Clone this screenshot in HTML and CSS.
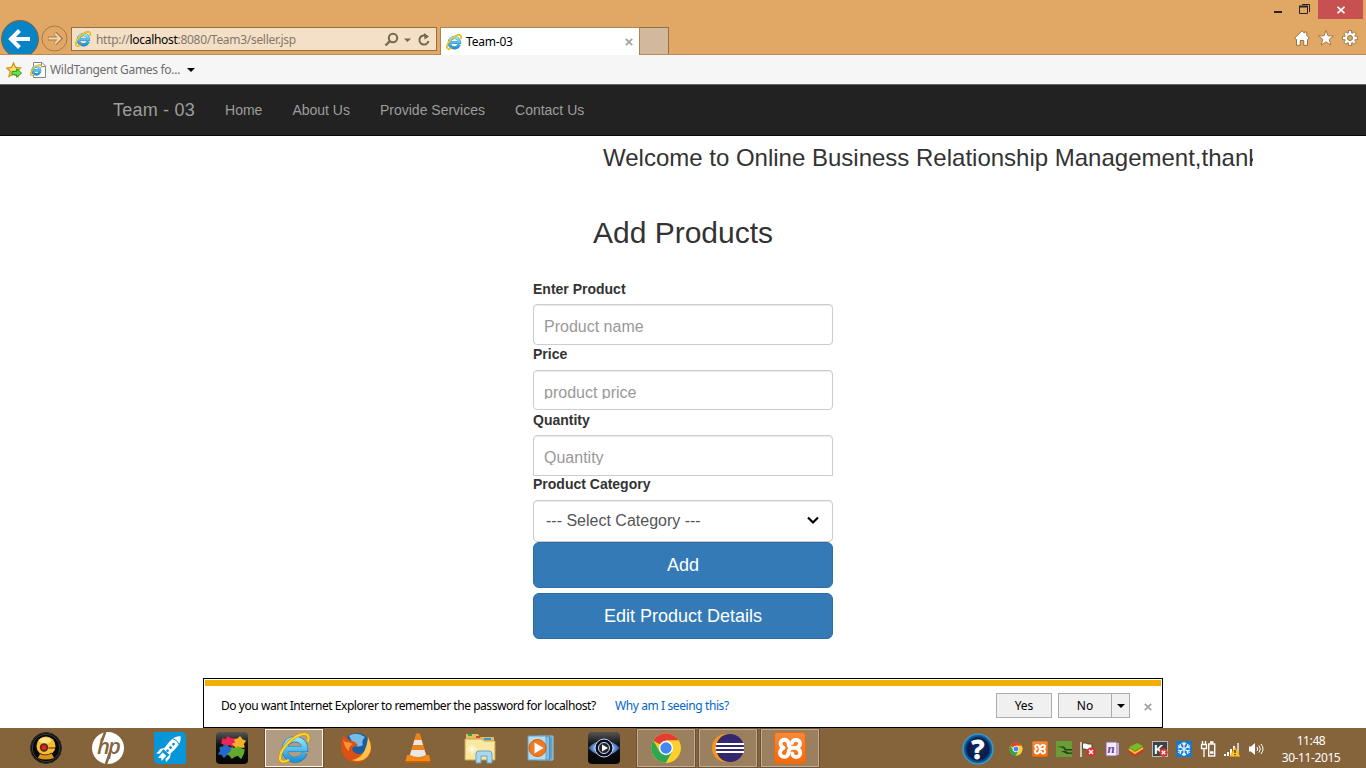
FILE: index.html
```html
<!DOCTYPE html>
<html lang="en">
<head>
<meta charset="utf-8">
<title>Team-03</title>
<link rel="stylesheet" href="styles.css">
</head>
<body>
<svg class="defs" aria-hidden="true">
  <defs>
    <linearGradient id="ieBlue" x1="0" y1="0" x2="0" y2="1"><stop offset="0" stop-color="#8ee4fb"/><stop offset="1" stop-color="#2196d6"/></linearGradient>
    <linearGradient id="gloss" x1="0" y1="0" x2="0" y2="1"><stop offset="0" stop-color="#555"/><stop offset=".4" stop-color="#111"/><stop offset="1" stop-color="#050505"/></linearGradient>
    <linearGradient id="orange" x1="0" y1="0" x2="0" y2="1"><stop offset="0" stop-color="#f58a3c"/><stop offset="1" stop-color="#f2690c"/></linearGradient>
    <radialGradient id="helpBlue"><stop offset="0" stop-color="#142c66"/><stop offset=".7" stop-color="#071b4a"/><stop offset="1" stop-color="#1686c8"/></radialGradient>
    <radialGradient id="eyeBlue"><stop offset="0" stop-color="#e8f5ff"/><stop offset=".6" stop-color="#84aeea"/><stop offset="1" stop-color="#1c3f80"/></radialGradient>
  </defs>
  <symbol id="ie" viewBox="0 0 32 32">
    <path d="M26.6 21A10.3 10.3 0 1 1 27.2 17H8.5" fill="none" stroke="#1878b5" stroke-width="6"/>
    <path d="M26.3 21A10.2 10.2 0 1 1 27 17H8.5" fill="none" stroke="url(#ieBlue)" stroke-width="5"/>
    <path d="M29.8 10C31.5 5 30.3 1.6 25.8 1.9C16 2.4 1.5 17 1.8 26.5C2 31 6.5 30.7 11 28" fill="none" stroke="#c99200" stroke-width="3"/>
    <path d="M29.8 9.7C31.5 5 30.3 1.8 25.8 2C16 2.6 1.6 17 1.9 26.5C2.2 30.6 6.5 30.4 11 27.8" fill="none" stroke="#ffd52b" stroke-width="2.1"/>
  </symbol>
  <symbol id="chrome" viewBox="0 0 32 32">
    <circle cx="16" cy="16" r="14.7" fill="#f9cb25"/>
    <path d="M16 16L3.3 8.6A14.7 14.7 0 0 1 28.7 8.6H16Z" fill="#e23e31"/>
    <path d="M3.3 8.6A14.7 14.7 0 0 0 16 30.7L22.5 19.5L16 16L9.5 19.5Z" fill="#2ea850"/>
    <path d="M28.7 8.6H16V16L22.4 19.6L16 30.7A14.7 14.7 0 0 0 28.7 8.6Z" fill="#fbd02b"/>
    <circle cx="16" cy="16" r="7.2" fill="#fff"/><circle cx="16" cy="16" r="5.7" fill="#4487ef"/>
  </symbol>
  <symbol id="xampp" viewBox="0 0 32 32">
    <rect x=".5" y=".5" width="31" height="31" rx="3" fill="url(#orange)" stroke="#e8680f"/>
    <path d="M14.500 11.500C14.500 6.500 6.500 6.500 6.500 11.500C6.500 14 8 15 9.500 15.800C7.500 16.800 6 18.500 6 21C6 26 14 26.500 14.500 21C14.700 17.500 16 15.900 19 15.900H22.500M18 11C18 6.800 26 6.500 26 11.500C26 14 24.500 15.200 22.500 15.900C25 17 26.300 18.500 26.300 21C26.300 26 18.500 26.500 18.300 21.500M14.500 11.500C14.500 14.500 16 15.900 19 15.900" fill="none" stroke="#fff" stroke-width="3.800" stroke-linecap="round" stroke-linejoin="round"/>
  </symbol>
  <symbol id="badge" viewBox="0 0 10 10"><circle cx="5" cy="5" r="4.600" fill="#d8322d"/><path d="M3 3L7 7M7 3L3 7" stroke="#fff" stroke-width="1.400"/></symbol>
</svg>

<div class="window">
  <header class="titlebar">
    <svg class="back" viewBox="0 0 40 34"><circle cx="20" cy="19" r="18.500" fill="#0684c6" stroke="#876039"/><path d="M30 19H12M19.500 10.500L11 19L19.500 27.500" fill="none" stroke="#fff" stroke-width="4"/></svg>
    <svg class="forward" viewBox="0 0 27 27"><circle cx="13.500" cy="13.500" r="12.500" fill="none" stroke="#a5784a"/><path d="M7 13.500H19M14 8L19.500 13.500L14 19" fill="none" stroke="#a5784a" stroke-width="3.800"/><path d="M7.500 13.500H18.500M14 8.500L19 13.500L14 18.500" fill="none" stroke="#f3d5ae" stroke-width="2"/></svg>
    <div class="address">
      <svg class="i16"><use href="#ie"/></svg>
      <span class="url">http://<b>localhost</b>:8080/Team3/seller.jsp</span>
      <svg class="address-tools" viewBox="0 0 48 18"><g fill="none" stroke="#786552"><circle cx="9" cy="8" r="4.200" stroke-width="2"/><path d="M6 11L1.500 15.500" stroke-width="2.400"/><path d="M43 6.500A4.600 4.600 0 1 0 44.500 11" stroke-width="2"/></g><path d="M20 8.500H27L23.500 12ZM40 3L45 6.500L40.500 9.500Z" fill="#786552"/></svg>
    </div>
    <div class="tab"><svg class="i16"><use href="#ie"/></svg><span class="tab-name">Team-03</span><svg class="x" viewBox="0 0 8 8"><path d="M.8.800L7.200 7.200M7.200.800L.8 7.200" stroke="#a5a5a5" stroke-width="1.900"/></svg></div>
    <div class="new-tab"></div>
    <div class="window-side">
      <div class="controls">
        <svg class="minrest" viewBox="0 0 44 19"><path d="M0 12H8" stroke="#2a2320" stroke-width="2"/><path d="M25.500 6.500H33.500V13.500H25.500ZM28 4.500H35.500V12" fill="none" stroke="#2a2320"/><path d="M25 6.500H34" stroke="#2a2320" stroke-width="2"/></svg>
        <div class="close"><svg class="x" viewBox="0 0 8 8"><path d="M.5.800L7.500 7.200M7.500.800L.5 7.200" stroke="#fff" stroke-width="1.800"/></svg></div>
      </div>
      <div class="tools">
        <svg class="i16" viewBox="0 0 16 16"><path d="M8 .8L.7 8L2.500 9.500V15.300H6.300V10.500H9.700V15.300H13.500V9.500L15.300 8L12.800 5.500V2H10.300V3Z" fill="#fff" stroke="#98713f"/></svg>
        <svg class="i16" viewBox="0 0 16 16"><path d="M8 .5L10 5.800L15.500 6L11.200 9.400L12.800 15L8 11.900L3.200 15L4.800 9.400L.5 6L6 5.800Z" fill="#fff" stroke="#98713f" stroke-width=".9"/></svg>
        <svg class="i16" viewBox="0 0 16 16"><g stroke="#98713f" stroke-width="4"><path d="M8 .3V15.700M.3 8H15.700M2.700 2.700L13.300 13.300M13.300 2.700L2.700 13.300"/></g><g stroke="#fff" stroke-width="2.300"><path d="M8 1V15M1 8H15M3.100 3.100L12.900 12.900M12.900 3.100L3.100 12.900"/></g><circle cx="8" cy="8" r="5" fill="#fff"/><circle cx="8" cy="8" r="2.500" fill="#e1a865" stroke="#98713f"/></svg>
      </div>
    </div>
  </header>

  <div class="favorites">
    <svg class="i16" viewBox="0 0 16 16"><path d="M7.500 1L9.500 5.500L14.500 6L10.800 9.300L12 14.500L7.500 12L3 14.500L4.200 9.300L.8 6L5.500 5.500Z" fill="#ffdf70" stroke="#d39413" stroke-width="1.300"/><path d="M6 9.300H10.700V6.800L15.500 11L10.700 15.300V12.800H6Z" fill="#6be04c" stroke="#239923"/></svg>
    <svg class="page-icon" viewBox="0 0 16 16"><path d="M3.500.5H12L15.500 4V15.500H3.500Z" fill="#fff" stroke="#858585"/><path d="M11.500.5V4.500H15.500" fill="none" stroke="#858585"/><use href="#ie" x="0" y="2" width="12" height="12"/></svg>
    <span class="fav-name">WildTangent Games fo...</span>
    <i class="caret"></i>
  </div>

  <nav class="navbar"><a class="brand">Team - 03</a><a>Home</a><a>About Us</a><a>Provide Services</a><a>Contact Us</a></nav>

  <main class="content">
    <div class="welcome">Welcome to Online Business Relationship Management,thank you</div>
    <h2>Add Products</h2>
    <form class="product-form">
      <label>Enter Product</label>
      <div class="field name"><span>Product name</span></div>
      <label>Price</label>
      <div class="field price"><span>product price</span></div>
      <label class="quantity-label">Quantity</label>
      <div class="field quantity"><span>Quantity</span></div>
      <label>Product Category</label>
      <div class="field category"><span>--- Select Category ---</span><svg class="chevron" viewBox="0 0 12 9"><path d="M1 1.500L6 6.500L11 1.500" fill="none" stroke="#000" stroke-width="2.200"/></svg></div>
      <button type="button">Add</button>
      <button type="button">Edit Product Details</button>
    </form>
  </main>

  <aside class="notice">
    <div class="stripe"></div>
    <div class="notice-row">
      <span class="question">Do you want Internet Explorer to remember the password for localhost?</span>
      <a class="why">Why am I seeing this?</a>
      <span class="answer yes">Yes</span>
      <span class="answer no">No</span><span class="answer drop"><i class="caret"></i></span>
      <svg class="x" viewBox="0 0 8 8"><path d="M.8.800L7.200 7.200M7.200.800L.8 7.200" stroke="#a5a5a5" stroke-width="1.900"/></svg>
    </div>
  </aside>

  <footer class="taskbar">
    <div class="apps">
      <div class="app"><svg viewBox="0 0 32 32"><circle cx="16" cy="16" r="15.500" fill="#090909" stroke="#303030"/><circle cx="16" cy="16" r="13.800" fill="none" stroke="#555" stroke-width=".7"/><path d="M10 22H22L24 26Q16 29 8 26Z" fill="#d99614"/><circle cx="16" cy="14" r="9.500" fill="#f7bc35"/><ellipse cx="15" cy="8.500" rx="6" ry="3" fill="#ffe58a"/><circle cx="14" cy="15.500" r="4.200" fill="#49301c"/><circle cx="14" cy="15.500" r="2.500" fill="#ee1e1e"/><path d="M18.500 16H25M9 21Q15 25 22 21" stroke="#4a2b08" fill="none"/></svg></div>
      <div class="app"><svg class="hp-logo" viewBox="0 0 32 32"><circle cx="16" cy="16" r="16" fill="#fff"/><text x="5" y="22" class="hp">hp</text><path d="M9.800 9L13.200 0M14 32L17.800 21" stroke="#86643e" stroke-width="2.500"/></svg></div>
      <div class="app"><svg viewBox="0 0 32 32"><path d="M0 0H29L32 3V32H3L0 29Z" fill="#0796d8"/><g transform="translate(16.500 15.500) rotate(42)"><path d="M0 -15C5 -11 5 -5 4 6H-4C-5 -5 -5 -11 0 -15Z" fill="#fff"/><path d="M-4 4L-6.500 8V14L-4 12ZM4 4L6.500 8V14L4 12Z" fill="#fff"/><path d="M-2.500 9H2.500V16L0 14L-2.500 16Z" fill="#fff"/><path d="M-4 7.500H4M-4 -8Q0 -10 4 -8" fill="none" stroke="#0796d8"/><circle cy="-4.500" r="1.400" fill="#0796d8"/><circle cy="0" r="1.400" fill="#0796d8"/><circle cy="4.300" r="1.300" fill="#0796d8"/></g></svg></div>
      <div class="app"><svg viewBox="0 0 32 32"><rect width="32" height="32" rx="4" fill="url(#gloss)"/><g stroke-linejoin="round" stroke-width="1.500"><path d="M7 7L10 8L12 5L15 7L19 7L18 11L20 13L16 14L13 12L10 15L8 12L6 11Z" fill="#ee2556" stroke="#ee2556"/><path d="M19 8L22 7L24 5L26 8L29 9L27 12L28 15L24 15L21 17L19 14L17 12L20 11Z" fill="#f4b126" stroke="#f4b126"/><path d="M4 16L7 15L9 13L12 15L15 16L14 19L15 23L11 22L8 25L6 22L3 22L5 19Z" fill="#256acb" stroke="#256acb"/><path d="M16 16L20 17L22 15L25 17L28 18L27 22L25 26L22 23L19 24L16 26L14 23L12 22L15 20Z" fill="#62a82e" stroke="#62a82e"/></g></svg></div>
      <div class="app open active"><svg viewBox="0 0 32 32"><use href="#ie"/></svg></div>
      <div class="app"><svg viewBox="0 0 32 32"><circle cx="17" cy="14.500" r="13.500" fill="#1b5e9f"/><path d="M9 4Q16 -1 25 5Q21 9 23 13Q16 17 13 11Z" fill="#78bce5"/><path d="M3 4Q7 5 9 8L15 10L18 13L12 16Q13 22 20 22Q27 21 29 9Q34 17 29 24Q22 33 12 30Q1 26 1 14Q1 8 3 4Z" fill="#dc4f15"/><path d="M28 5Q34 16 28 24Q22 31 12 28Q26 26 28 5Z" fill="#ffc347"/><path d="M3 8Q6 11 8 10L13 12Q8 15 9 19Q5 17 3 8Z" fill="#f89432"/></svg></div>
      <div class="app"><svg viewBox="0 0 32 32"><path d="M5 23H27L29 31H3Z" fill="#f28a18"/><path d="M14 2Q16 0 18 2L25 25Q16 30 7 25Z" fill="#ef831b"/><path d="M12.500 8H19.500L21 13H11ZM9.600 18H22.400L24 23Q16 27 8 23Z" fill="#e8e8e8"/><path d="M3 30H29" stroke="#c45f05" stroke-width="2"/></svg></div>
      <div class="app"><svg viewBox="0 0 32 32"><path d="M2 2H14L16 5H30V27H2Z" fill="#dfbd61"/><path d="M1 7H18L20 9H31V28H1Z" fill="#f9e7a2" stroke="#c9a54d"/><path d="M4 3H8" stroke="#27a747" stroke-width="2"/><path d="M12 5H16" stroke="#d64331" stroke-width="2"/><path d="M20 7H27" stroke="#3399db" stroke-width="2"/><path d="M12 31V22Q12 19 15 19H25Q28 19 28 22V31H23V24H17V31Z" fill="#a9d8ef" stroke="#65a5ca"/><path d="M8 13V22M3 17H13M5 14L11 20M11 14L5 20" stroke="#fff" stroke-width=".8"/></svg></div>
      <div class="app"><svg viewBox="0 0 32 32"><path d="M12 4H27V28H12Z" fill="#5fa1cb" stroke="#9acde8"/><path d="M8 4H23.500V28H8Z" fill="#8bbddd" stroke="#4c8fb8"/><path d="M2 4H20V28H2Z" fill="#b9dcec" stroke="#5ba3c8"/><circle cx="11.500" cy="16" r="8.500" fill="#f17a22" stroke="#d65b0c"/><path d="M8.500 10.500L17.500 16L8.500 21.500Z" fill="#fff"/></svg></div>
      <div class="app"><svg viewBox="0 0 32 32"><rect width="32" height="32" rx="4" fill="url(#gloss)"/><path d="M0 16Q16 0 32 16Q16 32 0 16Z" fill="url(#eyeBlue)"/><circle cx="16" cy="16" r="9" fill="#0a1020" stroke="#b9dcff"/><circle cx="16" cy="16" r="5.500" fill="#202630" stroke="#ddd"/><path d="M14 12.500L20 16L14 19.500Z" fill="#fff"/></svg></div>
      <div class="app open"><svg viewBox="0 0 32 32"><use href="#chrome"/></svg></div>
      <div class="app open"><svg viewBox="0 0 32 32"><circle cx="14" cy="16" r="14" fill="#f5941e"/><circle cx="18" cy="16" r="14" fill="#33276d"/><path d="M4 12H32M3.500 16H32M4 20H32" stroke="#fff" stroke-width="2"/></svg></div>
      <div class="app open"><svg viewBox="0 0 32 32"><use href="#xampp"/></svg></div>
    </div>

    <svg class="help" viewBox="0 0 32 32"><circle cx="16" cy="16" r="15" fill="url(#helpBlue)" stroke="#35a2dd" stroke-width="1.200"/><text x="16" y="26" text-anchor="middle" class="help-mark">?</text></svg>
    <div class="tray">
      <svg viewBox="0 0 16 16"><use href="#chrome" x="1" y="1" width="14" height="14"/></svg>
      <svg viewBox="0 0 16 16"><use href="#xampp"/></svg>
      <svg viewBox="0 0 16 16"><path d="M0 0H16V16H0Z" fill="#6b9d36"/><path d="M1 5.500H8L10 8H16V9.500H9L7 7ZM5 10H10L12 11.500H16V13H11Z" fill="#26421b"/></svg>
      <svg viewBox="0 0 16 16"><path d="M1 1V16" stroke="#fff" stroke-width="1.300"/><path d="M2.500 2H6L8 3H12V9H7L5 8H2.500Z" fill="#fff" stroke="#55442e"/><use href="#badge" x="6" y="6" width="10" height="10"/></svg>
      <svg viewBox="0 0 16 16"><path d="M2 1H13V15H2Z" fill="#f2edf7" stroke="#8462a0"/><path d="M13 2H15V14H13" fill="#c4a5d5"/><text x="3.500" y="12" class="note-mark">n</text></svg>
      <svg viewBox="0 0 16 16"><path d="M1 10L7 14L15 9" fill="none" stroke="#d62f2f" stroke-width="2.500"/><path d="M1 8L7 12L15 7" fill="none" stroke="#f5c422" stroke-width="2"/><path d="M1 6L9 2L15 5L7 10Z" fill="#75bd25"/></svg>
      <svg viewBox="0 0 16 16"><rect width="16" height="16" fill="#b9b9b9"/><rect x="1" y="1" width="14" height="14" fill="#3d4242"/><text x="2" y="12.500" class="k-mark">K</text><use href="#badge" x="7" y="7" width="9" height="9"/></svg>
      <svg viewBox="0 0 16 16"><rect width="16" height="16" fill="#1878d0"/><path d="M8 1V15M2 4.500L14 11.500M14 4.500L2 11.500M6 2L8 4L10 2M6 14L8 12L10 14M2 7L5 6L4 3M14 9L11 10L12 13M14 7L11 6L12 3M2 9L5 10L4 13" stroke="#e2f6ff" stroke-width="1.300" fill="none"/></svg>
      <svg viewBox="0 0 16 16"><path d="M1 3.500H7M2.500 0V3M5.500 0V3M1.500 4V7.500H6.500V4M4 8V16" fill="none" stroke="#fff" stroke-width="1.300"/><rect x="8.700" y="3" width="6" height="12" fill="none" stroke="#fff" stroke-width="1.400"/><path d="M10 1.500H13.500M10 11.500H13.500" stroke="#fff" stroke-width="2.500"/></svg>
      <svg viewBox="0 0 16 16"><path d="M1 13V15M4 11V15M7 8V15M10 5V15" stroke="#fff" stroke-width="2"/><path d="M14 2V15" stroke="#ccc" stroke-width="2"/><path d="M11 6L16 15.500H6Z" fill="#ffc62b" stroke="#e79b00" stroke-width=".6"/><path d="M11 9V12M11 13V14.300" stroke="#443000" stroke-width="1.300"/></svg>
      <svg viewBox="0 0 16 16"><path d="M1 5.500H3L7 2V14L3 10.500H1Z" fill="#fff"/><path d="M9 6Q10.500 8 9 10M11 4.500Q13.500 8 11 11.500M13 3Q17 8 13 13" stroke="#fff" fill="none"/></svg>
    </div>
    <div class="clock"><span class="time">11:48</span><span class="date">30-11-2015</span></div>
  </footer>
</div>
</body>
</html>
```
FILE: styles.css
```css
* { box-sizing: border-box; }
body { margin: 0; overflow: hidden; color: #333; background: #fff; font: 14px/20px "Liberation Sans", Arial, sans-serif; }
svg { display: block; flex: none; }
.defs { position: absolute; width: 0; height: 0; }
.window { position: relative; display: flex; flex-direction: column; width: 1366px; height: 768px; overflow: hidden; }
.titlebar { display: flex; align-items: flex-end; flex: none; height: 55px; background: #e1a865; border-bottom: 1px solid #b98d57; }
.back { width: 40px; height: 34px; }
.forward { width: 27px; height: 27px; margin: 0 2px 2px 1px; }
.i16 { width: 16px; height: 16px; }
.address { display: flex; align-items: center; width: 366px; height: 24px; margin: 0 3px 3px 1px; padding: 0 4px 0 3px; border: 1px solid #957044; background: #f4e0c7; }
.url, .tab-name, .fav-name, .question, .why, .answer, .clock { font-family: "Noto Sans", sans-serif; font-size: 12px; white-space: nowrap; }
.url { margin-left: 5px; padding-top: 1px; color: #85776a; letter-spacing: -.3px; }
.url b { color: #000; font-weight: 400; }
.address-tools { width: 48px; height: 18px; margin-left: auto; }
.tab { display: flex; align-items: center; width: 200px; height: 28px; margin-bottom: -1px; padding: 0 6px 0 5px; background: #fff; border: 1px solid #ad8451; border-bottom: 0; }
.tab-name { margin-left: 4px; color: #000; letter-spacing: -.2px; }
.x { width: 8px; height: 8px; }
.tab .x { margin-left: auto; }
.new-tab { width: 29px; height: 27px; background: #d2b99b; border: 1px solid #957044; border-width: 1px 1px 0 0; }
.window-side { display: flex; flex-direction: column; align-self: flex-start; margin-left: auto; }
.controls { display: flex; }
.minrest { width: 44px; height: 19px; }
.close { display: flex; justify-content: center; align-items: center; width: 45px; height: 19px; margin-right: 3px; background: #c75050; }
.tools { display: flex; justify-content: flex-end; gap: 8px; margin: 11px 8px 0 0; }
.favorites { display: flex; align-items: center; flex: none; height: 30px; padding-left: 6px; background: #f6f6f6; border-bottom: 1px solid #666; }
.page-icon { width: 16px; height: 16px; margin-left: 8px; }
.fav-name { width: 137px; margin-left: 4px; color: #6d6d6d; letter-spacing: -.3px; }
.caret { width: 0; border: 4px solid transparent; border-top-color: #000; border-bottom: 0; }
.navbar { display: flex; align-items: center; flex: none; height: 51px; padding-left: 98px; color: #9d9d9d; background: #222; border-bottom: 1px solid #080808; }
.navbar a { padding: 0 15px; }
.navbar .brand { font-size: 18px; letter-spacing: .22px; }
.content { flex: 1; }
.welcome { width: 1140px; height: 40px; margin-left: 113px; padding: 9px 0 0 490px; overflow: hidden; font-size: 24px; line-height: 26px; white-space: nowrap; }
h2 { margin: 40px 0 30px; font-size: 30px; font-weight: 400; line-height: 33px; text-align: center; }
.product-form { display: flex; flex-direction: column; width: 300px; margin: 0 auto; }
label { height: 25px; font-weight: 700; line-height: 19px; }
label:first-child { line-height: 20px; }
.quantity-label { line-height: 21px; }
.field { display: flex; align-items: flex-start; height: 41px; padding: 13px 10px 0; border: 1px solid #ccc; border-radius: 4px; box-shadow: inset 0 1px 1px rgba(0,0,0,.08); color: #999; font-size: 16px; line-height: 18px; }
.field span { overflow: hidden; }
.price { height: 40px; }
.price span { height: 15px; }
.quantity { border-bottom-left-radius: 0; border-bottom-right-radius: 0; }
.quantity span { height: 16px; }
.quantity + label { height: 24px; line-height: 17px; }
.category { height: 42px; padding: 10px 13px 0 12px; justify-content: space-between; color: #555; line-height: 20px; }
.chevron { width: 12px; height: 9px; margin-top: 5px; }
button { height: 46px; margin: 0 0 5px; padding: 0; border: 1px solid #2e6da4; border-radius: 6px; background: #337ab7; color: #fff; font: 18px/24px "Liberation Sans", Arial, sans-serif; }
.notice { position: absolute; left: 203px; bottom: 40px; width: 960px; height: 50px; padding: 1px; border: 1px solid #000; background: #fff; }
.stripe { height: 6px; background: #f1af00; }
.notice-row { display: flex; align-items: center; height: 40px; padding: 0 9px 0 16px; }
.question { width: 394px; color: #000; letter-spacing: -.45px; }
.why { color: #0066cc; letter-spacing: -.4px; }
.answer { display: flex; align-items: center; justify-content: center; height: 25px; margin-bottom: 1px; color: #000; background: #f0f0f0; border: 1px solid #acacac; }
.yes { width: 56px; margin-left: auto; }
.no { width: 54px; margin-left: 6px; }
.drop { width: 19px; margin: 0 14px 1px -1px; }
.notice .x { margin-top: 2px; }
.taskbar { display: flex; align-items: center; flex: none; height: 40px; background: #85633b; }
.apps { display: flex; gap: 4px; padding-left: 17px; }
.app { display: flex; align-items: center; justify-content: center; width: 58px; height: 40px; }
.app svg { width: 32px; height: 32px; }
.open { height: 38px; border: 1px solid #c3ab91; background: #9b805f; align-self: center; box-shadow: 0 0 0 1px #6b5135; }
.active { border-color: #fff3e6; background: #b19b83; }
.app .hp-logo, .help { overflow: visible; }
.hp { font: italic 600 22px/1 "Open Sans", sans-serif; fill: #86643e; letter-spacing: -2px; }
.help { width: 32px; height: 32px; margin: 1px 0 0 143px; }
.help-mark { font: 700 27px/1 "Open Sans", sans-serif; fill: #fff; stroke: #fff; stroke-width: .8px; }
.tray { display: flex; gap: 8px; margin: 1px 0 0 14px; }
.tray svg { width: 16px; height: 16px; }
.note-mark { font: italic 700 13px "Liberation Serif", serif; fill: #713c91; }
.k-mark { font: 700 13px "Liberation Sans", sans-serif; fill: #fff; }
.clock { display: flex; flex-direction: column; align-items: center; width: 80px; margin-left: 7px; padding-top: 1px; color: #fff; line-height: 17px; letter-spacing: -.4px; }
```
